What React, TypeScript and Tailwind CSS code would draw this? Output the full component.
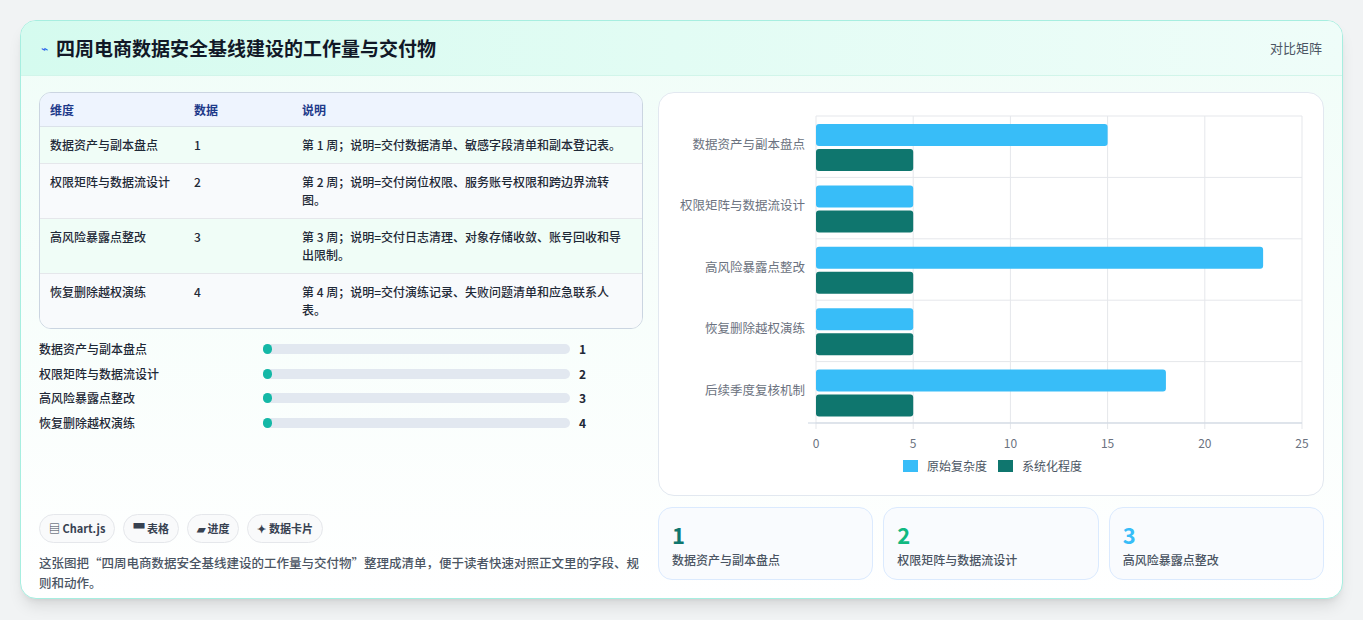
const F = { fontFamily: '"Noto Sans CJK SC","Noto Sans",sans-serif' };
const rows = [
  ["数据资产与副本盘点", "1", "第 1 周；说明=交付数据清单、敏感字段清单和副本登记表。"],
  ["权限矩阵与数据流设计", "2", "第 2 周；说明=交付岗位权限、服务账号权限和跨边界流转图。"],
  ["高风险暴露点整改", "3", "第 3 周；说明=交付日志清理、对象存储收敛、账号回收和导出限制。"],
  ["恢复删除越权演练", "4", "第 4 周；说明=交付演练记录、失败问题清单和应急联系人表。"],
];
const chart = [
  ["数据资产与副本盘点", 15, 5],
  ["权限矩阵与数据流设计", 5, 5],
  ["高风险暴露点整改", 23, 5],
  ["恢复删除越权演练", 5, 5],
  ["后续季度复核机制", 18, 5],
];
function Chart() {
  const x0 = 157, w = 486, top = 23, band = 61.4, u = w / 25;
  return (
    <svg width="664" height="402" style={F}>
      {[0, 5, 10, 15, 20, 25].map((t) => (
        <g key={t}>
          <line x1={x0 + t * u} x2={x0 + t * u} y1={top} y2={top + band * 5 + 6} stroke="#e5e7eb" />
          <text x={x0 + t * u} y={top + band * 5 + 25} fontSize="12" fill="#6b7280" textAnchor="middle">{t}</text>
        </g>
      ))}
      {[0, 1, 2, 3, 4, 5].map((i) => (
        <line key={i} x1={x0} x2={x0 + w} y1={top + i * band} y2={top + i * band} stroke="#e5e7eb" />
      ))}
      <line x1={x0 - 8} x2={x0 + w} y1={top + band * 5} y2={top + band * 5} stroke="#cbd5e1" />
      {chart.map(([l, a, b], i) => {
        const y = top + i * band;
        return (
          <g key={i}>
            <text x={x0 - 11} y={y + 33} fontSize="12.5" fill="#6b7280" textAnchor="end">{l}</text>
            <rect x={x0} y={y + 8} width={(a as number) * u} height={22} rx="3" fill="#38bdf8" />
            <rect x={x0} y={y + 33} width={(b as number) * u} height={22} rx="3" fill="#0f766e" />
          </g>
        );
      })}
      <rect x="244" y="367" width="15" height="12" fill="#38bdf8" />
      <text x="268" y="378" fontSize="12" fill="#4b5563">原始复杂度</text>
      <rect x="339" y="367" width="15" height="12" fill="#0f766e" />
      <text x="363" y="378" fontSize="12" fill="#4b5563">系统化程度</text>
    </svg>
  );
}
export default function App() {
  return (
    <div className="w-[1363px] h-[620px] bg-[#f1f3f4] pt-[20px] pl-[20px]" style={F}>
      <div className="w-[1323px] h-[579px] rounded-[16px] border border-[#a7eee0] bg-white overflow-hidden shadow-lg flex flex-col bg-gradient-to-b from-[#f0fdf8] to-white">
        <div className="h-[55px] flex items-center justify-between px-[20px] bg-gradient-to-r from-[#d5fbef] to-[#effdf9] border-b border-[#d1f5ea]">
          <div className="flex items-center gap-[8px]">
            <span className="text-[#2563eb] text-[12px]">⌁</span>
            <span className="text-[19px] font-bold text-[#111827]">四周电商数据安全基线建设的工作量与交付物</span>
          </div>
          <span className="text-[13px] text-[#4b5563]">对比矩阵</span>
        </div>
        <div className="flex gap-[15px] px-[18px] pt-[16px]">
          <div className="w-[604px] flex flex-col">
            <div className="rounded-[12px] border border-[#cbd5e1] overflow-hidden text-[12px] text-[#1f2937]">
              <div className="flex h-[34px] items-center bg-[#eef4fe] text-[#1e3a8a] font-semibold border-b border-[#dbe2ea]">
                <div className="w-[154px] pl-[10px]">维度</div><div className="w-[108px]">数据</div><div>说明</div>
              </div>
              {rows.map((r, i) => (
                <div key={i} className={`flex py-[9px] leading-[18px] font-medium ${i < 3 ? "border-b border-[#e5e7eb]" : ""} ${i % 2 ? "bg-[#f8fafc]" : "bg-[#f0fdf7]"}`}>
                  <div className="w-[154px] pl-[10px]">{r[0]}</div><div className="w-[108px]">{r[1]}</div><div className="w-[330px]">{r[2]}</div>
                </div>
              ))}
            </div>
            <div className="mt-[11px] flex flex-col gap-[6.5px]">
              {rows.map((r, i) => (
                <div key={i} className="flex items-center h-[18px] text-[12px] font-medium text-[#1f2937]">
                  <div className="w-[224px]">{r[0]}</div>
                  <div className="w-[307px] h-[10px] rounded-full bg-[#e2e8f0] relative">
                    <div className="absolute left-0 top-0 w-[9px] h-[10px] rounded-full bg-[#14b8a6]" />
                  </div>
                  <div className="ml-[9px] font-bold">{r[1]}</div>
                </div>
              ))}
            </div>
            <div className="mt-[82px] flex gap-[8px] text-[11px] font-semibold text-[#374151]">
              {["▤ Chart.js", "▀ 表格", "▰ 进度", "✦ 数据卡片"].map((c) => (
                <span key={c} className="h-[29px] px-[9px] flex items-center rounded-full border border-[#e5e7eb] bg-[#f9fafb]">{c}</span>
              ))}
            </div>
            <p className="mt-[10px] text-[12.5px] leading-[20px] text-[#4b5563] font-medium">这张图把“四周电商数据安全基线建设的工作量与交付物”整理成清单，便于读者快速对照正文里的字段、规则和动作。</p>
          </div>
          <div className="w-[666px] flex flex-col gap-[11px]">
            <div className="h-[404px] rounded-[16px] border border-[#e2e8f0] bg-white"><Chart /></div>
            <div className="flex gap-[10px]">
              {[["1", "text-[#0f766e]", "数据资产与副本盘点"], ["2", "text-[#10b981]", "权限矩阵与数据流设计"], ["3", "text-[#38bdf8]", "高风险暴露点整改"]].map(([n, c, l]) => (
                <div key={n} className="flex-1 h-[73px] rounded-[14px] border border-[#dbeafe] bg-[#f9fbfe] px-[13px] pt-[12px]">
                  <div className={`text-[22px] font-bold leading-[28px] ${c}`}>{n}</div>
                  <div className="text-[12px] text-[#4b5563] font-medium mt-[3px]">{l}</div>
                </div>
              ))}
            </div>
          </div>
        </div>
      </div>
    </div>
  );
}
